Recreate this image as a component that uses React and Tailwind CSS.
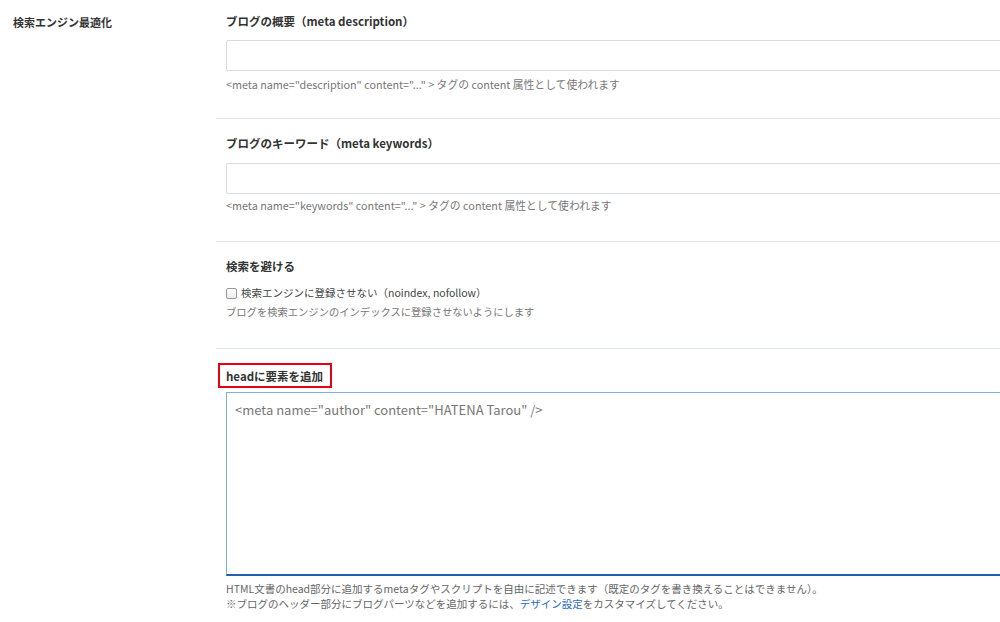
import React from 'react';

const FONT = "font-['Noto_Sans_CJK_JP','Noto_Sans',sans-serif]";

function Title({ children }) {
  return <h3 className="text-[11.5px] leading-[16px] font-bold text-[#333]">{children}</h3>;
}

function Help({ children, className = '' }) {
  return <p className={`leading-[14px] text-[#777] ${className}`}>{children}</p>;
}

export default function App() {
  return (
    <div className={`${FONT} w-[1000px] h-[622px] overflow-hidden bg-white flex`}>
      <div className="w-[216px] shrink-0 pl-[13px] pt-[14px]">
        <h2 className="text-[11px] leading-[16px] font-bold text-[#333]">検索エンジン最適化</h2>
      </div>

      <div className="w-[900px] shrink-0">
        {/* meta description */}
        <section className="pl-[10px] pt-[13px] pb-[27px] border-b border-[#e1e7e8]">
          <Title>ブログの概要（meta description）</Title>
          <input className="mt-[11px] block w-full h-[31px] border border-[#d5dcdf] rounded-[2px] bg-white" />
          <Help className="mt-[6px] text-[10.8px]">&lt;meta name="description" content="..." &gt; タグの content 属性として使われます</Help>
        </section>

        {/* meta keywords */}
        <section className="pl-[10px] pt-[16px] pb-[29px] border-b border-[#e1e7e8]">
          <Title>ブログのキーワード（meta keywords）</Title>
          <input className="mt-[12px] block w-full h-[31px] border border-[#d5dcdf] rounded-[2px] bg-white" />
          <Help className="mt-[4px] text-[10.8px]">&lt;meta name="keywords" content="..." &gt; タグの content 属性として使われます</Help>
        </section>

        {/* noindex */}
        <section className="pl-[10px] pt-[16px] pb-[29px] border-b border-[#e1e7e8]">
          <Title>検索を避ける</Title>
          <label className="mt-[12px] flex items-center gap-[4px] text-[10.5px] leading-[14px] text-[#444]">
            <span className="w-[11px] h-[11px] border border-[#9a9a9a] rounded-[2px] bg-gradient-to-b from-white to-[#ececec]" />
            検索エンジンに登録させない（noindex, nofollow）
          </label>
          <Help className="mt-[5px] text-[10.3px]">ブログを検索エンジンのインデックスに登録させないようにします</Help>
        </section>

        {/* head */}
        <section className="pl-[10px] pt-[14px]">
          <div className="-ml-[8px] w-[114px] h-[25px] border-2 border-[#e60012] pl-[6px] flex items-center">
            <Title>headに要素を追加</Title>
          </div>
          <div className="mt-[4px] h-[184px] border border-[#7eaee2] border-b-[#2160ad] border-b-2 px-[8px] pt-[8px] text-[13px] leading-[18px] text-[#777] bg-white">
            &lt;meta name="author" content="HATENA Tarou" /&gt;
          </div>
          <div className="mt-[5px] text-[10.5px] leading-[15px] text-[#666]">
            <p>HTML文書のhead部分に追加するmetaタグやスクリプトを自由に記述できます（既定のタグを書き換えることはできません）。</p>
            <p>
              ※ブログのヘッダー部分にブログパーツなどを追加するには、
              <a className="text-[#2a6bc0]">デザイン設定</a>
              をカスタマイズしてください。
            </p>
          </div>
        </section>
      </div>
    </div>
  );
}
